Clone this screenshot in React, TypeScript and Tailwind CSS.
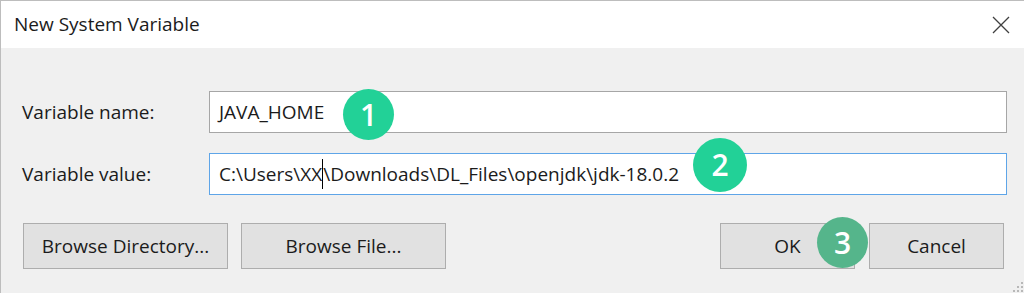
import React from "react";

const font = { fontFamily: '"Open Sans", "Noto Sans", Arial, sans-serif' };

function Badge({ n, className }: { n: string; className: string }) {
  return (
    <span
      className={`absolute flex items-center justify-center rounded-full text-white font-semibold text-[30px] leading-none ${className}`}
    >
      {n}
    </span>
  );
}

function Button({ label, w }: { label: string; w: string }) {
  return (
    <button
      className={`${w} h-[46px] bg-[#e1e1e1] border border-[#adadad] text-[19px] text-[#1b1b1b] flex items-center justify-center`}
    >
      {label}
    </button>
  );
}

export default function App() {
  return (
    <div
      className="w-[1024px] h-[293px] border-t border-l border-[#bdbdbd] bg-[#f0f0f0] flex flex-col overflow-hidden relative"
      style={font}
    >
      {/* Title bar */}
      <div className="h-[47px] bg-white flex items-center justify-between pl-[13px] pr-[13px] shrink-0">
        <span className="text-[19px] text-[#1b1b1b]">New System Variable</span>
        <svg width="18" height="18" viewBox="0 0 18 18" className="mr-[1px]">
          <path d="M1 1 L17 17 M17 1 L1 17" stroke="#404040" strokeWidth="1.3" />
        </svg>
      </div>

      {/* Body */}
      <div className="flex flex-col pl-[21px] pr-[17px] pt-[43px]">
        <div className="flex items-center h-[42px]">
          <span className="w-[187px] text-[19px] text-[#1b1b1b]">Variable name:</span>
          <div className="flex-1 h-full bg-white border border-[#a6a6a6] flex items-center pl-[9px] text-[19px] text-[#1b1b1b]">
            JAVA_HOME
          </div>
        </div>
        <div className="flex items-center h-[42px] mt-[20px]">
          <span className="w-[187px] text-[19px] text-[#1b1b1b]">Variable value:</span>
          <div className="flex-1 h-full bg-white border border-[#5ea5e8] flex items-center pl-[9px] text-[19px] text-[#1b1b1b]">
            C:\Users\XX
            <span className="inline-block w-px h-[30px] bg-black mx-[0px]" />
            \Downloads\DL_Files\openjdk\jdk-18.0.2
          </div>
        </div>
        <div className="flex items-center mt-[28px] pl-[1px] pr-[3px]">
          <div className="flex gap-[13px]">
            <Button label="Browse Directory..." w="w-[205px]" />
            <Button label="Browse File..." w="w-[205px]" />
          </div>
          <div className="flex gap-[14px] ml-auto">
            <Button label="OK" w="w-[135px]" />
            <Button label="Cancel" w="w-[135px]" />
          </div>
        </div>
      </div>

      {/* resize grip */}
      <svg width="12" height="12" viewBox="0 0 12 12" className="absolute right-0 bottom-0">
        {[
          [9, 1],
          [9, 5],
          [5, 5],
          [9, 9],
          [5, 9],
          [1, 9],
        ].map(([x, y], i) => (
          <rect key={i} x={x} y={y} width="2" height="2" fill="#b8b8b8" />
        ))}
      </svg>

      {/* numbered callouts */}
      <Badge n="1" className="left-[342px] top-[88px] w-[51px] h-[51px] bg-[#22d197]" />
      <Badge n="2" className="left-[692px] top-[137px] w-[54px] h-[54px] bg-[#22d197]" />
      <Badge n="3" className="left-[816px] top-[216px] w-[51px] h-[51px] bg-[#55b58b]" />
    </div>
  );
}
